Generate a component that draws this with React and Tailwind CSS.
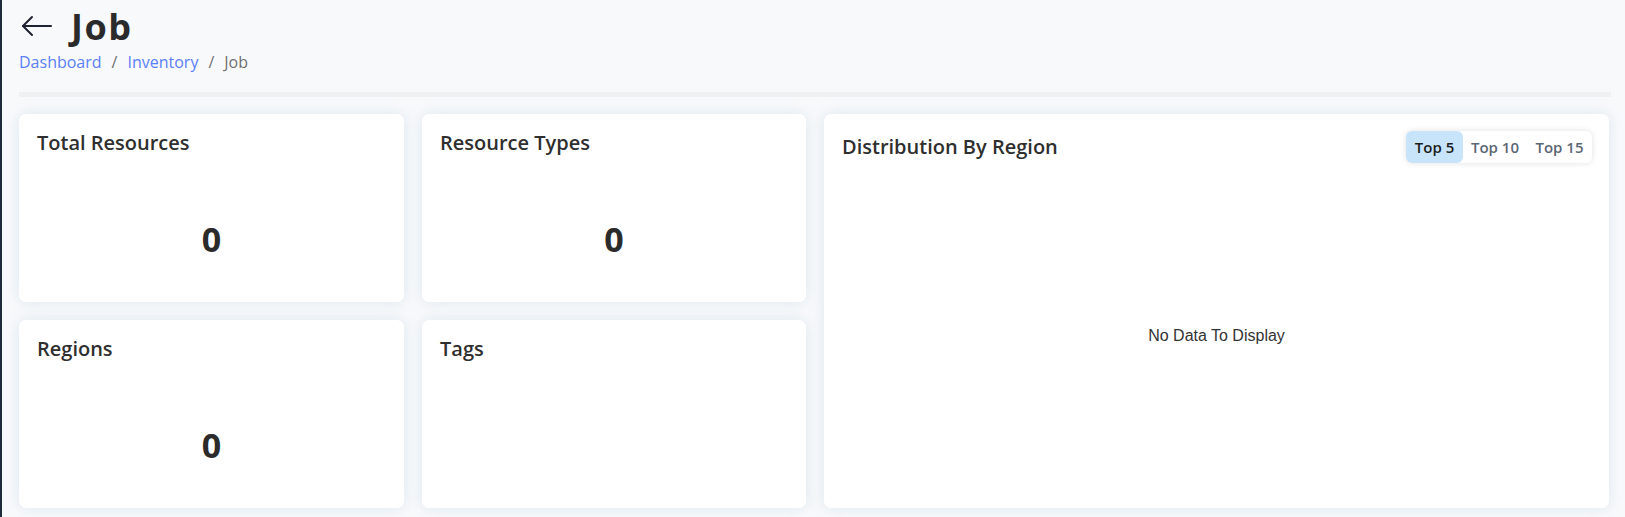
import React from "react";

const FONT = { fontFamily: '"Open Sans", "Liberation Sans", sans-serif' };

function StatCard({ title, value }) {
  return (
    <div className="flex flex-col rounded-[7px] bg-white shadow-[0_0_14px_rgba(170,200,218,0.35)] h-[188px]">
      <div className="pl-[18px] pt-[17px] text-[20px] leading-[24px] font-[550] text-[#2f2f2f]">{title}</div>
      {value !== undefined && (
        <div className="mt-[64px] text-center text-[34px] leading-[40px] font-bold text-[#2b2b2b]">{value}</div>
      )}
    </div>
  );
}

export default function App() {
  return (
    <div style={FONT} className="min-h-screen w-full bg-[#f8f9fb] border-l-2 border-[#1f2a3c] pl-[17px] pr-[14px] pt-[4px]">
      <div className="flex items-center h-[42px]">
        <svg width="32" height="22" viewBox="0 0 32 22" className="ml-[2px] mt-[2px]" fill="none" stroke="#1f2230" strokeWidth="2" strokeLinecap="round" strokeLinejoin="round">
          <path d="M30 11H2" />
          <path d="M11 2L2 11l9 9" />
        </svg>
        <div className="ml-[18px] mt-[4px] text-[36px] leading-[40px] font-bold tracking-[1.5px] text-[#2b2b2b]">Job</div>
      </div>
      <div className="mt-[6px] flex items-center text-[16px] leading-[20px] text-[#707070]">
        <span className="text-[#5b7ff7]">Dashboard</span>
        <span className="mx-[10px]">/</span>
        <span className="text-[#5b7ff7]">Inventory</span>
        <span className="mx-[10px]">/</span>
        <span>Job</span>
      </div>
      <div className="mt-[20px] h-[5px] bg-[#eef0f2]" />
      <div className="mt-[17px] mr-[2px] grid grid-cols-[385px_384px_1fr] grid-rows-[188px_188px] gap-x-[18px] gap-y-[18px]">
        <StatCard title="Total Resources" value="0" />
        <StatCard title="Resource Types" value="0" />
        <div className="row-span-2 flex flex-col rounded-[7px] bg-white shadow-[0_0_14px_rgba(170,200,218,0.35)]">
          <div className="flex items-center justify-between pl-[18px] pr-[17px] pt-[17px]">
            <div className="text-[20px] leading-[24px] font-[550] text-[#2f2f2f]">Distribution By Region</div>
            <div className="flex h-[32px] rounded-[6px] bg-white shadow-[0_0_6px_rgba(0,0,0,0.12)] text-[15px] font-semibold">
              <div className="flex w-[57px] items-center justify-center rounded-[6px] bg-[#c8e4fb] text-[#1c1c1c]">Top 5</div>
              <div className="flex w-[64px] items-center justify-center text-[#5c6775]">Top 10</div>
              <div className="flex w-[65px] items-center justify-center text-[#5c6775]">Top 15</div>
            </div>
          </div>
          <div className="flex flex-1 items-center justify-center">
            <span style={{ fontFamily: '"Liberation Sans", Arial, sans-serif' }} className="text-[16px] text-[#333333]">No Data To Display</span>
          </div>
        </div>
        <StatCard title="Regions" value="0" />
        <StatCard title="Tags" />
      </div>
    </div>
  );
}
